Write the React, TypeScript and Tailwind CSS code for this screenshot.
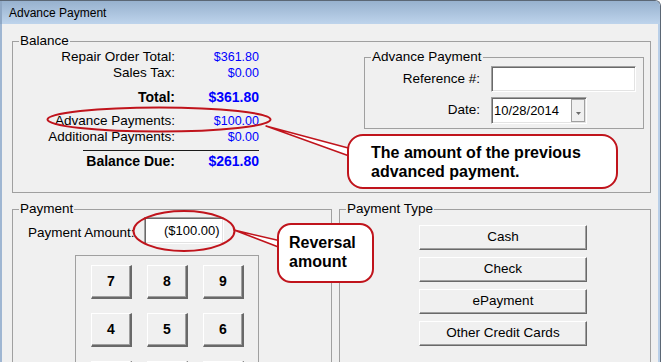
import React from 'react'

const font = { fontFamily: '"Liberation Sans", Arial, sans-serif' }

const raised =
  'flex items-center justify-center bg-[#f0f0f0] border border-t-white border-l-white border-b-[#696969] border-r-[#696969] shadow-[inset_-1px_-1px_0_#a0a0a0]'

const sunken =
  'bg-white border border-t-[#a0a0a0] border-l-[#a0a0a0] border-b-white border-r-white shadow-[inset_1px_1px_0_#696969,inset_-1px_-1px_0_#e3e3e3]'

const Group: React.FC<{ label: string; className?: string; children?: React.ReactNode }> = ({
  label,
  className,
  children,
}) => (
  <div className={`relative shrink-0 border border-[#a0a0a0] ${className ?? ''}`}>
    <span className="absolute -top-[9px] left-[6px] bg-[#f0f0f0] px-[1px] text-[13.5px] leading-[16px] text-black">
      {label}
    </span>
    {children}
  </div>
)

const BalanceRow: React.FC<{ label: string; value: string; bold?: boolean; className?: string }> = ({
  label,
  value,
  bold,
  className,
}) => (
  <div className={`grid grid-cols-[162px_84px] leading-[16px] ${className ?? ''}`}>
    <span className={`text-right text-black ${bold ? 'font-bold text-[14px]' : 'text-[13.5px]'}`}>{label}</span>
    <span className={`text-right text-[#0000ff] ${bold ? 'font-bold text-[14px]' : 'text-[12.5px]'}`}>{value}</span>
  </div>
)

// third row sits under the window edge, only its top border shows
const keys = ['7', '8', '9', '4', '5', '6', '', '', '']
const paymentTypes = ['Cash', 'Check', 'ePayment', 'Other Credit Cards']

export default function App() {
  return (
    <div className="relative w-[663px] h-[362px] overflow-hidden bg-white" style={font}>
      <div className="flex flex-col w-[661px] h-[362px] rounded-tr-[6px] border-t border-r border-[#5b6775] overflow-hidden">
        {/* Title bar */}
        <div className="shrink-0 h-[23px] flex items-center pl-[7px] bg-gradient-to-b from-[#97b1ce] to-[#bed4ec] border-l-2 border-[#8fa8c5] text-[12px] text-black">
          Advance Payment
        </div>

        {/* Client area */}
        <div className="flex-1 min-h-0 overflow-hidden bg-[#f0f0f0] border-l-2 border-r-2 border-l-[#9fb6d2] border-r-[#b9cfe8]">
          <Group label="Balance" className="ml-[10px] mt-[17px] w-[639px] h-[152px]">
            <div className="flex items-start">
              <div className="pt-[7px]">
                <BalanceRow label="Repair Order Total:" value="$361.80" />
                <BalanceRow label="Sales Tax:" value="$0.00" />
                <BalanceRow label="Total:" value="$361.80" bold className="mt-[8px]" />
                <BalanceRow label="Advance Payments:" value="$100.00" className="mt-[8px]" />
                <BalanceRow label="Additional Payments:" value="$0.00" />
                <div className="mt-[5px] ml-[70px] w-[176px] h-[1px] bg-[#1a1a1a]" />
                <BalanceRow label="Balance Due:" value="$261.80" bold className="mt-[2px]" />
              </div>

              <Group label="Advance Payment" className="ml-auto mr-[6px] mt-[15px] w-[280px] h-[72px]">
                <div className="pt-[8px]">
                  <div className="flex items-center h-[26px]">
                    <span className="w-[115px] text-right text-[13.5px]">Reference #:</span>
                    <div className={`ml-[11px] w-[145px] h-[26px] ${sunken}`} />
                  </div>
                  <div className="flex items-center h-[27px] mt-[5px]">
                    <span className="w-[115px] text-right text-[13.5px]">Date:</span>
                    <div className={`ml-[11px] w-[96px] h-[27px] flex items-center ${sunken}`}>
                      <span className="flex-1 pl-[2px] text-[13px] leading-[16px]">10/28/2014</span>
                      <div className="mr-[1px] w-[14px] h-[23px] flex items-end justify-center pb-[6px] bg-[#f0f0f0] border border-[#a0a0a0]">
                        <svg width="5" height="3" viewBox="0 0 5 3">
                          <path d="M0 0h5L2.5 3z" fill="#6b6b6b" />
                        </svg>
                      </div>
                    </div>
                  </div>
                </div>
              </Group>
            </div>
          </Group>

          <div className="flex ml-[10px] mt-[16px]">
            <Group label="Payment" className="w-[320px] h-[170px]">
              <div className="pt-[7px] pl-[15px]">
                <div className="flex items-center">
                  <span className="text-[13.5px] leading-[16px] mt-[5px]">Payment Amount:</span>
                  <div className={`ml-[9px] w-[80px] h-[27px] flex items-center justify-end pr-[3px] ${sunken}`}>
                    <span className="text-[13px] leading-[16px]">($100.00)</span>
                  </div>
                </div>
                <div className="mt-[11px] ml-[47px] w-[184px] h-[130px] border border-[#a0a0a0]">
                  <div className="grid grid-cols-[41px_41px_41px] gap-x-[15px] gap-y-[14px] pt-[9px] pl-[15px]">
                    {keys.map((k, i) => (
                      <div
                        key={i}
                        className={`${raised} h-[34px] border-b-2 border-r-2 font-bold text-[14px]`}
                      >
                        {k}
                      </div>
                    ))}
                  </div>
                </div>
              </div>
            </Group>

            <Group label="Payment Type" className="ml-[7px] w-[312px] h-[170px]">
              <div className="flex flex-col gap-[7px] pt-[15px] pl-[79px]">
                {paymentTypes.map(t => (
                  <div key={t} className={`${raised} w-[168px] h-[25px] text-[13.5px]`}>
                    {t}
                  </div>
                ))}
              </div>
            </Group>
          </div>
        </div>
      </div>

      {/* Annotations */}
      <svg className="absolute left-0 top-0 pointer-events-none" width="663" height="362">
        <ellipse cx="159" cy="119.5" rx="111.5" ry="12" fill="none" stroke="#c0141c" strokeWidth="2" />
        <ellipse cx="184" cy="231" rx="50.5" ry="20" fill="none" stroke="#c0141c" strokeWidth="2" />
        <polygon points="266,126 352,149 352,157" fill="#ffffff" stroke="#c0141c" strokeWidth="1.5" strokeLinejoin="round" />
        <polygon points="234,230 281,241 281,248" fill="#ffffff" stroke="#c0141c" strokeWidth="1.5" strokeLinejoin="round" />
      </svg>

      <div className="absolute left-[347px] top-[134px] w-[271px] h-[55px] rounded-[16px] border-2 border-[#c0141c] bg-white pl-[22px] pt-[7px] font-bold text-[16px] leading-[19px] text-black">
        The amount of the previous
        <br />
        advanced payment.
      </div>

      <div className="absolute left-[277px] top-[223px] w-[97px] h-[60px] rounded-[14px] border-2 border-[#c0141c] bg-white pl-[10px] pt-[8px] font-bold text-[16px] leading-[19px] text-black">
        Reversal
        <br />
        amount
      </div>
    </div>
  )
}
